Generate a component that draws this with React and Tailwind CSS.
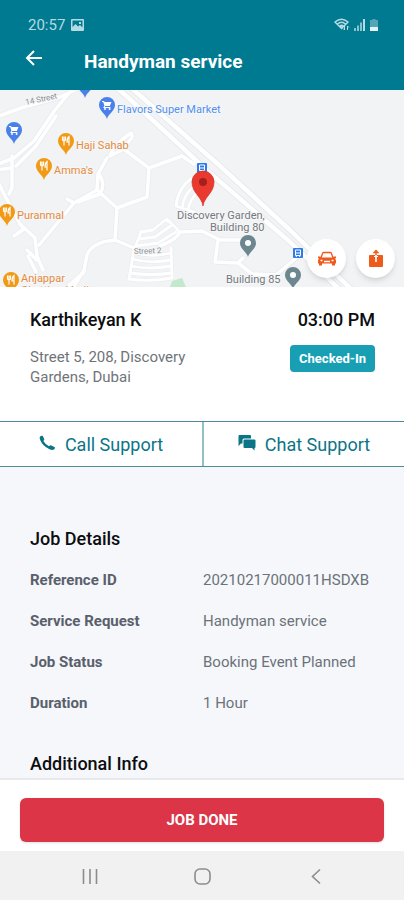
import React from "react";

const roads = [
  "M-4 27 L24 17 L60 7 L84 -4",
  "M74 -3 L55 20 L34 51 L14 68 L-4 75",
  "M56 26 L36 56 L16 76",
  "M12 66 L12 98 L9 104",
  "M-4 80 L12 78",
  "M-4 88 L4 104 L20 134 L35 148 L37 166 L43 180",
  "M14 146 L24 139 L20 134",
  "M27 160 L37 170 M28 166 L36 182",
  "M131 43 Q134 46 130 50 L122 60 L110 66 Q114 54 131 43",
  "M125 60 L149 78 L147 107 L117 118 L97 100 L98 84 L107 68",
  "M99 84 Q106 94 100 104 L78 112",
  "M97 100 L74 113 L39 155 M67 109 L74 113",
  "M149 78 L182 66 M182 66 L194 74",
  "M117 118 L115 150 L134 158",
  "M115 150 Q92 152 87 165 L84 180 L72 200 M84 182 L66 198",
  "M160 156 Q176 150 180 142 L202 141 L220 150 L240 150 L252 154 M218 150 L215 172 L238 173 L243 168 M238 173 L252 184 L276 185 L296 168",
];

const lanes = [
  "M141 142 L153 140 L165 130 L169 132",
  "M139 149 L155 147 L172 135",
  "M136 156 L158 153 L176 142",
  "M133 162 Q150 168 171 163",
  "M132 169 Q150 174 171 170",
  "M131 176 Q150 180 171 176",
  "M130 183 Q150 186 172 183",
  "M129 189 Q150 192 172 188",
  "M141 142 L134 160 L129 189 M167 129 L180 142 M171 158 L172 188",
  "M192 88 Q178 98 176 116 M194 96 Q184 104 182 118 M196 104 Q190 110 188 120 M176 116 L194 122",
];

const highway = ["M114 -4 L123 3 L183 58 L202 76 L290 152 L340 200", "M128 -4 L135 1 L220 76 L290 140 L352 200"];

function Pin({ x, y, color, kind }) {
  return (
    <g transform={`translate(${x} ${y})`}>
      <path d="M0 14 C-1 9 -8 6 -8 0 A8 8 0 1 1 8 0 C8 6 1 9 0 14Z" fill={color} />
      {kind === "food" && (
        <path d="M-3.5 -4.5V-1.5Q-3.5 0 -2 0Q-.5 0 -.5 -1.5V-4.5M-2 -4.5V4.5M3 4.5V-4.5Q1 -3 1 1H3" stroke="#fff" strokeWidth="1.2" fill="none" />
      )}
      {kind === "cart" && (
        <g fill="#fff">
          <path d="M-5 -4H-3L-2.4 -3H4.5L2.8 1H-1.8L-2.4 2H3.4V3H-3.8L-2.6 .4L-3.8 -3H-5Z" />
          <circle cx="-2" cy="4" r="1" />
          <circle cx="2.6" cy="4" r="1" />
        </g>
      )}
      {kind === "place" && <circle r="3" fill="#fff" />}
    </g>
  );
}

function Station({ x, y }) {
  return (
    <g transform={`translate(${x} ${y})`}>
      <rect x="-5" y="-5" width="10" height="10" rx="1" fill="#2f7bea" />
      <path d="M-2.5 -3H2.5V2.5H-2.5ZM-2.5 0H2.5M-2 4L-1 2.5M2 4L1 2.5" stroke="#fff" fill="none" />
    </g>
  );
}

function MapDrawing() {
  return (
    <svg viewBox="0 0 404 197" preserveAspectRatio="xMidYMid slice" className="block h-[197px] w-full bg-[#f1f3f4]" role="img" aria-label="Map">
      <path d="M170 197 L172 191 L182 188 L186 197Z" fill="#c4e8cd" />
      <g fill="none" strokeLinejoin="round" strokeLinecap="round">
        {roads.map((d) => <path key={d} d={d} stroke="#e9ebed" strokeWidth="5" />)}
        {lanes.map((d) => <path key={d} d={d} stroke="#e9ebed" strokeWidth="4" />)}
        {highway.map((d) => <path key={d} d={d} stroke="#e3e6e8" strokeWidth="6" />)}
        {roads.map((d) => <path key={d} d={d} stroke="#fff" strokeWidth="3.5" />)}
        {lanes.map((d) => <path key={d} d={d} stroke="#fff" strokeWidth="2.8" />)}
        {highway.map((d) => <path key={d} d={d} stroke="#fff" strokeWidth="4.5" />)}
      </g>
      <g className="font-['Roboto',sans-serif]" fontSize="11" stroke="#f6f7f8" strokeWidth="2" paintOrder="stroke" strokeLinejoin="round">
        <g fill="#8a8f94" fontSize="8">
          <text transform="translate(26 15) rotate(-12)">14 Street</text>
          <text transform="translate(134 164) rotate(-2)">Street 2</text>
        </g>
        <text x="117" y="23" fill="#5290f0">Flavors Super Market</text>
        <g fill="#e58a3c">
          <text x="76" y="59">Haji Sahab</text>
          <text x="54" y="84">Amma's</text>
          <text x="17" y="129">Puranmal</text>
          <text x="21" y="192">Anjappar</text>
          <text x="21" y="204">Chettinad Indian</text>
        </g>
        <g fill="#74797e">
          <text x="177" y="129">Discovery Garden,</text>
          <text x="210" y="141">Building 80</text>
          <text x="226" y="193">Building 85</text>
        </g>
      </g>
      <Pin x={85} y={-6} color="#4a80ea" />
      <Pin x={107} y={15} color="#4a80ea" kind="cart" />
      <Pin x={14} y={40} color="#4a80ea" kind="cart" />
      <Pin x={66} y={51} color="#f29a15" kind="food" />
      <Pin x={44} y={76} color="#f29a15" kind="food" />
      <Pin x={7} y={122} color="#f29a15" kind="food" />
      <Pin x={11} y={190} color="#f29a15" kind="food" />
      <Pin x={248} y={153} color="#6c8790" kind="place" />
      <Pin x={293} y={185} color="#6c8790" kind="place" />
      <Station x={202} y={78} />
      <Station x={298} y={163} />
      <path d="M203 116 C202 107 192 103 192 92 A11 11 0 0 1 214 92 C214 103 204 107 203 116Z" fill="#ea3a30" stroke="#d22e27" strokeWidth=".7" />
      <circle cx="203" cy="92" r="4" fill="#a5201b" />
    </svg>
  );
}

function StatusBar() {
  return (
    <div className="flex h-10 items-end justify-between pr-[25px] pl-7 text-[#b5dbe2]">
      <div className="flex items-center gap-[6px] leading-[30px]">
        <span className="text-[15px]">20:57</span>
        <svg width="13" height="12" viewBox="0 0 13 12" aria-hidden="true">
          <path fillRule="evenodd" fill="currentColor" d="M1 0H12Q13 0 13 1V11Q13 12 12 12H1Q0 12 0 11V1Q0 0 1 0ZM1.500 1.500V8L4.500 5L7 7.500L9 6L11.500 8.500V1.500ZM8 3H10V5H8Z" />
        </svg>
      </div>
      <svg width="46" height="30" viewBox="0 0 46 30" aria-hidden="true">
        <g fill="none" stroke="currentColor" strokeWidth="1.4">
          <path d="M2 12Q8.500 6.500 15 12L8.500 18.500ZM4.500 14Q8.500 10.500 12.500 14" />
        </g>
        <path d="M6 15.500Q8.500 13.500 11 15.500L8.500 18.500Z" fill="currentColor" />
        <path d="M11.500 16V20L10 18.500M14.500 20V16L16 17.500" stroke="currentColor" fill="none" />
        <path d="M21 18h2v3h-2zM24 15.500h2v5.500h-2zM27 12.500h2v8.500h-2z" fill="currentColor" opacity=".75" />
        <path d="M30 9h2v12h-2z" fill="currentColor" />
        <path d="M37 10H39.500V9H42.500V10H45V21H37Z" fill="currentColor" opacity=".45" />
        <path d="M37 17H45V21H37Z" fill="#e4f3f5" />
      </svg>
    </div>
  );
}

const details = [
  ["Reference ID", "20210217000011HSDXB"],
  ["Service Request", "Handyman service"],
  ["Job Status", "Booking Event Planned"],
  ["Duration", "1 Hour"],
];

export default function App() {
  return (
    <div className="flex min-h-screen flex-col bg-[#f5f7fb] font-['Roboto',sans-serif] text-[#0c0d0f]">
      <header className="bg-[#007a90] pb-3">
        <StatusBar />
        <div className="flex items-center gap-10 pt-[6px] pl-6">
          <button aria-label="Back" className="-mt-2 text-white">
            <svg width="20" height="20" viewBox="0 0 20 20" fill="none" stroke="currentColor" strokeWidth="2" aria-hidden="true">
              <path d="M18 10H3M10 3L3 10L10 17" />
            </svg>
          </button>
          <h1 className="text-[19px] leading-8 font-bold text-white">Handyman service</h1>
        </div>
      </header>

      <div className="relative">
        <MapDrawing />
        <div className="absolute right-[9px] bottom-[9px] flex gap-[10px]">
          <button aria-label="Directions" className="flex size-[39px] items-center justify-center rounded-full bg-white shadow-md">
            <svg width="20" height="16" viewBox="0 0 20 16" aria-hidden="true">
              <path d="M4 7L5.500 2.500Q5.800 1.500 7 1.500H13Q14.200 1.500 14.500 2.500L16 7" fill="none" stroke="#ee5a1c" strokeWidth="1.300" />
              <path d="M1 5.500H3.500L3.800 6.500H16.200L16.500 5.500H19V7L18 7.500Q19 8.500 19 10V12.500H18V14.500H15V12.500H5V14.500H2V12.500H1V10Q1 8.500 2 7.500L1 7Z" fill="#ee5a1c" />
              <path d="M3.500 9.500H5.500M14.500 9.500H16.500M7 10.500H13" stroke="#fff" strokeWidth="1.400" />
            </svg>
          </button>
          <button aria-label="Share" className="flex size-[39px] items-center justify-center rounded-full bg-white shadow-md">
            <svg width="16" height="20" viewBox="0 0 16 20" aria-hidden="true">
              <path d="M1 7Q1 6 2 6H14Q15 6 15 7V17Q15 18 14 18H2Q1 18 1 17Z" fill="#ee5a1c" />
              <path d="M8 13V6" stroke="#fff" strokeWidth="1.600" />
              <path d="M6 7.500H10" stroke="#fff" />
              <path d="M8 6V2M5.500 4.200L8 1.500L10.500 4.200" stroke="#ee5a1c" strokeWidth="1.500" fill="none" />
            </svg>
          </button>
        </div>
      </div>

      <section className="flex justify-between bg-white px-[30px] pt-[22px] pb-[34px]">
        <div>
          <h2 className="text-[18px] leading-[22px] font-medium">Karthikeyan K</h2>
          <p className="mt-4 max-w-[180px] text-[15px] leading-5 text-[#6f7479]">Street 5, 208, Discovery Gardens, Dubai</p>
        </div>
        <div className="-mr-px flex flex-col items-end">
          <time className="text-[18px] leading-[22px] font-medium">03:00 PM</time>
          <span className="mt-[14px] rounded bg-[#189fb4] px-[9px] text-[13px] leading-[27px] font-bold text-white">Checked-In</span>
        </div>
      </section>

      <div className="grid grid-cols-2 border-y border-[#4f8a9c] bg-white text-[18px] leading-[43px] text-[#0b7587]">
        <button className="flex items-center justify-center gap-[9px] pt-px">
          <svg width="17" height="16" viewBox="0 0 17 16" className="mb-1" aria-hidden="true">
            <path d="M.8 2Q2 .3 3.800 1L5.300 4.200Q5.300 5.300 4.300 6Q6.300 9.300 10 11.200Q11 10.200 12.200 10.400L15.800 12.200Q16.300 13.500 15 14.600Q13 15.400 10.500 14.300Q3.500 11 1.200 5Q.4 3.200 .8 2Z" fill="currentColor" />
          </svg>
          Call Support
        </button>
        <button className="flex items-center justify-center gap-[9px] border-l-2 border-[#8fc0c2]">
          <svg width="18" height="17" viewBox="0 0 18 17" className="mb-1" aria-hidden="true">
            <path d="M1.500 1H12Q13 1 13 2V4.500H6Q4.500 4.500 4.500 6V9.500H3L.5 12V2Q.5 1 1.500 1Z" fill="currentColor" />
            <path d="M6.500 5.500H16.500Q17.500 5.500 17.500 6.500V13Q17.500 14 16.500 14V16.500L14 14H6.500Q5.500 14 5.500 13V6.500Q5.500 5.500 6.500 5.500Z" fill="currentColor" />
          </svg>
          Chat Support
        </button>
      </div>

      <main className="flex-1 pt-[61px] pl-[30px]">
        <h2 className="text-[18px] leading-[22px] font-medium">Job Details</h2>
        <dl className="mt-5 grid grid-cols-[173px_1fr] gap-y-[21px] text-[15px] leading-5">
          {details.map(([name, value]) => (
            <React.Fragment key={name}>
              <dt className="font-bold text-[#59606b]">{name}</dt>
              <dd className="text-[#6c7279]">{value}</dd>
            </React.Fragment>
          ))}
        </dl>
        <h2 className="mt-10 text-[18px] leading-[22px] font-medium">Additional Info</h2>
      </main>

      <footer>
        <div className="border-t-2 border-[#e7e9ec] bg-white px-5 pt-[18px] pb-[9px]">
          <button className="h-11 w-full rounded-[6px] bg-[#dc3547] text-[15px] font-bold text-white shadow-sm">JOB DONE</button>
        </div>
        <nav className="flex h-[49px] items-center justify-between bg-[#f1f1f1] px-20 text-[#8c8c8c]">
          <button aria-label="Recent apps">
            <svg width="20" height="20" viewBox="0 0 20 20" stroke="currentColor" strokeWidth="1.600" aria-hidden="true"><path d="M3.500 3V18M10 3V18M16.500 3V18" /></svg>
          </button>
          <button aria-label="Home">
            <svg width="20" height="20" viewBox="0 0 20 20" fill="none" stroke="currentColor" strokeWidth="1.600" aria-hidden="true"><rect x="3" y="3" width="15" height="15" rx="5" /></svg>
          </button>
          <button aria-label="Back to previous">
            <svg width="20" height="20" viewBox="0 0 20 20" fill="none" stroke="currentColor" strokeWidth="1.600" aria-hidden="true"><path d="M16 3.500L8.500 10.500L16 17.500" /></svg>
          </button>
        </nav>
      </footer>
    </div>
  );
}
